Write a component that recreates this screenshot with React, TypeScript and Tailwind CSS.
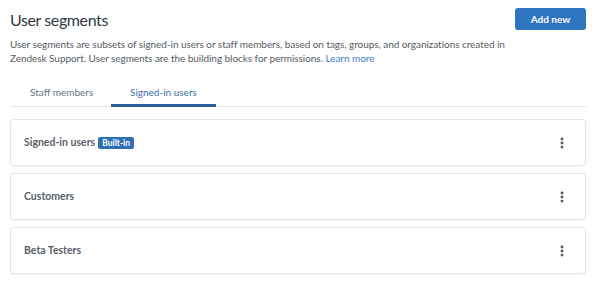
import { MoreVertical } from 'lucide-react';

const segments = [
  { name: 'Signed-in users', builtIn: true },
  { name: 'Customers', builtIn: false },
  { name: 'Beta Testers', builtIn: false },
];

export default function App() {
  return (
    <div
      className="h-[284px] w-[598px] bg-white px-[10px] pt-[8px] text-[#49545c]"
      style={{ fontFamily: 'Lato, "Open Sans", sans-serif' }}
    >
      <div className="flex items-start justify-between">
        <h1 className="mt-[1px] text-[16px] leading-[22px] tracking-[-0.4px] text-[#2f3941]">User segments</h1>
        <button className="mr-[2px] h-[22px] w-[71px] rounded-[3px] bg-[#2f74bf] text-[10px] font-bold text-white">
          Add new
        </button>
      </div>

      <p className="mt-[6px] text-[10px] leading-[14px] tracking-[-0.05px] text-[#555c63]">
        User segments are subsets of signed-in users or staff members, based on tags, groups, and organizations created in
        <br />
        Zendesk Support. User segments are the building blocks for permissions.{' '}
        <span className="text-[#3b7dc4]">Learn more</span>
      </p>

      <div className="mr-[2px] mt-[20px] flex border-b border-[#e4e6e8] text-[10px] leading-[14px]">
        <div className="w-[101px] pb-[6px] pl-[20px] text-[#68737d]">Staff members</div>
        <div className="-mb-[1px] w-[105px] border-b-[3px] border-[#2a5f9a] pb-[5px] pl-[19px] text-[#3b6fa8]">
          Signed-in users
        </div>
      </div>

      <div className="mr-[2px] mt-[12px] flex flex-col gap-[7px]">
        {segments.map((s) => (
          <div
            key={s.name}
            className="flex h-[47px] items-center justify-between rounded-[3px] border border-[#e3e5e7] pl-[13px] pr-[16px] shadow-[0_1px_1px_rgba(0,0,0,0.04)]"
          >
            <div className="flex items-center gap-[3px]">
              <span className="text-[10.5px] font-bold text-[#5a6168]">{s.name}</span>
              {s.builtIn && (
                <span className="rounded-[2px] bg-[#2f6fb5] px-[4px] text-[8.5px] font-bold leading-[12px] text-white">
                  Built-in
                </span>
              )}
            </div>
            <MoreVertical size={14} strokeWidth={3} className="text-[#49545c]" />
          </div>
        ))}
      </div>
    </div>
  );
}
